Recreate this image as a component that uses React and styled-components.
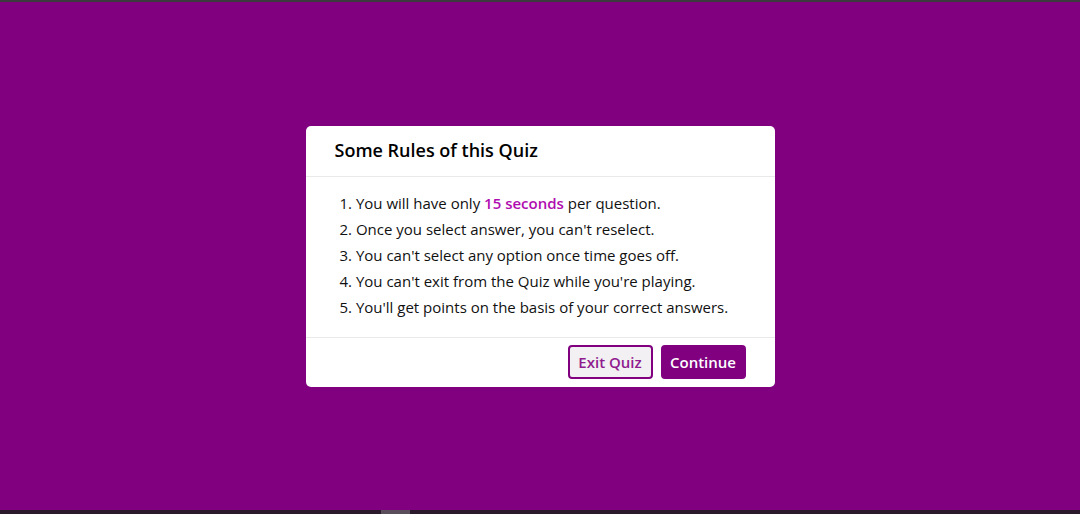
import styled, { createGlobalStyle } from "styled-components";

const GlobalStyle = createGlobalStyle`
  * { box-sizing: border-box; }
  html, body { margin: 0; padding: 0; }
  body {
    font-family: "Open Sans", "Liberation Sans", sans-serif;
    background: #800080;
  }
`;

const rules = [
  "Once you select answer, you can't reselect.",
  "You can't select any option once time goes off.",
  "You can't exit from the Quiz while you're playing.",
  "You'll get points on the basis of your correct answers.",
];

const App = () => {
  return (
    <Page>
      <GlobalStyle />
      <TopEdge />
      <Stage>
        <RulesBox>
          <Title>Some Rules of this Quiz</Title>
          <RuleList>
            <Rule>
              1. You will have only <Highlight>15 seconds</Highlight> per question.
            </Rule>
            {rules.map((text, i) => (
              <Rule key={i}>
                {i + 2}. {text}
              </Rule>
            ))}
          </RuleList>
          <Footer>
            <Button>Exit Quiz</Button>
            <Button primary>Continue</Button>
          </Footer>
        </RulesBox>
      </Stage>
      <BottomEdge>
        <Thumb />
      </BottomEdge>
    </Page>
  );
};

export default App;

const Page = styled.div`
  height: 100vh;
  display: flex;
  flex-direction: column;
  background: #800080;
`;

const TopEdge = styled.div`
  height: 2px;
  background: #3d3a3d;
`;

const BottomEdge = styled.div`
  height: 4px;
  background: #2b1a2b;
  padding-left: 381px;
`;

const Thumb = styled.div`
  width: 29px;
  height: 4px;
  background: #5a4e5a;
`;

const Stage = styled.div`
  flex: 1;
  display: flex;
  align-items: center;
  justify-content: center;
`;

const RulesBox = styled.div`
  width: 469px;
  background: #fff;
  border-radius: 5px;
`;

const Title = styled.div`
  padding: 12px 30px 0 29px;
  height: 51px;
  font-size: 18px;
  font-weight: 600;
  color: #000;
  border-bottom: 1px solid #e9e9e9;
`;

const RuleList = styled.ol`
  list-style: none;
  margin: 0;
  padding: 13px 30px 17px 34px;
  border-bottom: 1px solid #e9e9e9;
`;

const Rule = styled.li`
  font-size: 15px;
  line-height: 26px;
  color: #111;
`;

const Highlight = styled.span`
  color: #b00eb0;
  font-weight: 600;
`;

const Footer = styled.div`
  display: flex;
  justify-content: flex-end;
  gap: 8px;
  padding: 7px 29px 8px 0;
`;

const Button = styled.button`
  height: 34px;
  width: 85px;
  border-radius: 4px;
  font-family: inherit;
  font-size: 15px;
  font-weight: 600;
  cursor: pointer;
  border: 2px solid #800080;
  color: ${(p) => (p.primary ? "#fff" : "#8f1b8f")};
  background: ${(p) => (p.primary ? "#800080" : "#f2f0f2")};
`;
